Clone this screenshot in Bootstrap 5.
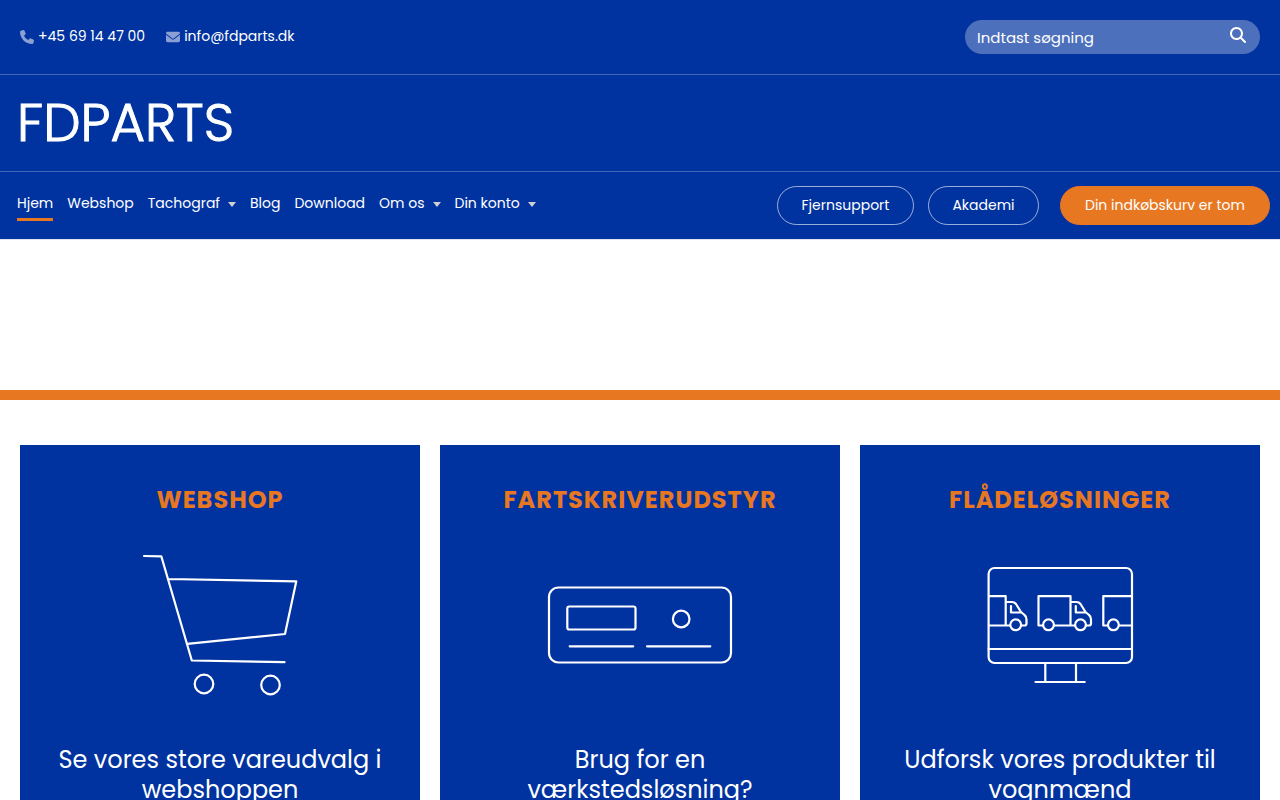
<!DOCTYPE html>
<html lang="da">
<head>
<meta charset="utf-8">
<meta name="viewport" content="width=device-width, initial-scale=1">
<title>FDPARTS</title>
<link href="https://cdn.jsdelivr.net/npm/bootstrap@5.3.0/dist/css/bootstrap.min.css" rel="stylesheet">
<style>
:root { --fd-blue: #0033a0; --fd-orange: #e87722; }
body { font-family: Poppins, Inter, "Noto Sans", sans-serif; font-size: 14px; line-height: 24px; color: #fff; background: #fff; }
header { background: var(--fd-blue); border-bottom: 1px solid #dfe3ea; }
header a { color: #fff; text-decoration: none; white-space: nowrap; }
.rule { border-bottom: 1px solid rgba(255,255,255,.25); }
.topbar { padding: 20px; }
.contact-icon { fill: #8c9fd5; margin-top: 2px; }
.contacts { padding-bottom: 2px; column-gap: 21px; }
.search-box { width: 295px; height: 34px; background: rgba(255,255,255,.3); border-radius: 17px; padding: 0 12px; }
.search-box input { font-size: 15px; color: #fff; background: none; border: 0; outline: 0; padding: 2px 0 0; min-width: 0; }
.search-box input::placeholder { color: #fff; opacity: 1; }
.search-box button { background: none; border: 0; padding: 0 2px 4px; color: #fff; line-height: 0; }
.brand-row { padding: 18px 17px; }
.brand-row a { font-weight: 300; font-size: 53px; line-height: 60px; -webkit-text-stroke: 1px #fff; }
.menu-row { min-height: 67px; padding: 14px 10px 13px 17px; }
.main-menu { column-gap: 14px; }
.main-menu a { display: flex; align-items: center; gap: 8px; padding: 3px 0 1px; border-bottom: 3px solid transparent; line-height: 28px; }
.main-menu a.active { border-color: var(--fd-orange); }
.main-menu .caret::after { content: ""; margin-top: 2px; border: 4px solid transparent; border-top: 5px solid #d0d0d0; border-bottom: 0; }
.pill { font-size: 14px; line-height: 21px; padding: 8px 12px; color: #fff; background: none; border: 1px solid rgba(255,255,255,.6); border-radius: 20px; }
.pill-support { min-width: 137px; }
.pill-academy { min-width: 111px; margin: 0 21px 0 14px; }
.pill-cart { min-width: 210px; background: var(--fd-orange); border-color: var(--fd-orange); }
.hero { height: 160px; border-bottom: 10px solid var(--fd-orange); }
.tiles { padding: 45px 10px; }
.tile-col { padding: 0 10px; }
.tile { background: var(--fd-blue); height: 100%; padding: 40px 32px 60px; color: #fff; }
.tile h2 { font-size: 24px; line-height: 30px; font-weight: 700; letter-spacing: 1px; color: var(--fd-orange); margin: 0 0 15px; text-transform: uppercase; }
.tile p { font-size: 24px; line-height: 30px; margin: 35px 0 0; }
.tile svg { display: block; margin: 0 auto; width: 200px; height: 180px; max-width: 100%; fill: none; stroke: #fff; stroke-width: 2.2; stroke-linecap: round; stroke-linejoin: round; }
</style>
</head>
<body>
<header>
  <div class="topbar rule d-flex flex-wrap justify-content-between align-items-center gap-3">
    <div class="contacts d-flex flex-wrap">
      <a href="tel:+4569144700" class="d-flex align-items-center gap-1"><svg class="contact-icon" width="14" height="14" viewBox="0 0 512 512" aria-hidden="true"><path d="M164.900 24.600c-7.700-18.600-28-28.500-47.400-23.200l-88 24C12.100 30.200 0 46 0 64c0 247.400 200.600 448 448 448 18 0 33.800-12.100 38.600-29.500l24-88c5.300-19.400-4.600-39.700-23.200-47.400l-96-40c-16.300-6.800-35.200-2.100-46.300 11.600L304.700 368C234.300 334.700 177.300 277.700 144 207.300L193.300 167c13.700-11.200 18.400-30 11.600-46.300z"/></svg><span>+45 69 14 47 00</span></a>
      <a href="mailto:info@fdparts.dk" class="d-flex align-items-center gap-1"><svg class="contact-icon" width="14" height="14" viewBox="0 0 512 512" aria-hidden="true"><path d="M48 64C21.500 64 0 85.500 0 112c0 15.100 7.100 29.300 19.200 38.400l217.600 163.200c11.400 8.500 27 8.500 38.400 0l217.600-163.200c12.100-9.100 19.200-23.300 19.200-38.400 0-26.500-21.500-48-48-48zM0 176v208c0 35.300 28.700 64 64 64h384c35.300 0 64-28.700 64-64V176L294.400 339.200c-22.800 17.100-54 17.100-76.800 0z"/></svg><span>info@fdparts.dk</span></a>
    </div>
    <form class="search-box d-flex align-items-center" role="search">
      <input class="flex-grow-1" type="search" placeholder="Indtast søgning" aria-label="Indtast søgning">
      <button type="submit" aria-label="Søg"><svg width="16" height="16" viewBox="0 0 512 512" fill="currentColor" aria-hidden="true"><path d="M416 208c0 45.900-14.900 88.300-40 122.700l126.600 126.700c12.500 12.500 12.500 32.800 0 45.300s-32.800 12.500-45.300 0L330.700 376c-34.400 25.200-76.800 40-122.700 40C93.100 416 0 322.900 0 208S93.100 0 208 0s208 93.100 208 208zM208 352a144 144 0 1 0 0-288 144 144 0 1 0 0 288z"/></svg></button>
    </form>
  </div>
  <div class="brand-row rule d-flex align-items-center"><a href="#">FDPARTS</a></div>
  <div class="menu-row d-flex flex-wrap justify-content-between align-items-start">
    <nav class="main-menu d-flex flex-wrap">
      <a href="#" class="active" aria-current="page">Hjem</a>
      <a href="#">Webshop</a>
      <a href="#" class="caret">Tachograf</a>
      <a href="#">Blog</a>
      <a href="#">Download</a>
      <a href="#" class="caret">Om os</a>
      <a href="#" class="caret">Din konto</a>
    </nav>
    <div class="d-flex flex-wrap">
      <button type="button" class="pill pill-support">Fjernsupport</button>
      <button type="button" class="pill pill-academy">Akademi</button>
      <button type="button" class="pill pill-cart">Din indkøbskurv er tom</button>
    </div>
  </div>
</header>
<main>
  <div class="hero"></div>
  <div class="tiles container-fluid">
    <div class="row g-0 text-center">
      <div class="col-12 col-md-4 tile-col">
        <section class="tile">
          <h2>Webshop</h2>
          <svg viewBox="120 530 200 180" aria-hidden="true">
            <path d="M144 556l17.300.300L191.800 660.500l92.700 1.700M168.300 579l128 2.300L285 634l-97.700 9.800"/>
            <circle cx="204" cy="684" r="9.300"/><circle cx="270.500" cy="685" r="9.300"/>
          </svg>
          <p>Se vores store vareudvalg i webshoppen</p>
        </section>
      </div>
      <div class="col-12 col-md-4 tile-col">
        <section class="tile">
          <h2>Fartskriverudstyr</h2>
          <svg viewBox="540 530 200 180" aria-hidden="true">
            <rect x="549" y="587.500" width="182" height="75" rx="9.500"/>
            <rect x="567.300" y="606.500" width="68.200" height="23" rx="2"/>
            <circle cx="681.200" cy="619" r="8.300"/>
            <path d="M569.700 646.300h63.500M647 646.300h63.300"/>
          </svg>
          <p>Brug for en værkstedsløsning?</p>
        </section>
      </div>
      <div class="col-12 col-md-4 tile-col">
        <section class="tile">
          <h2>Flådeløsninger</h2>
          <svg viewBox="960 530 200 180" aria-hidden="true">
            <rect x="988.600" y="568" width="143.400" height="95" rx="6"/>
            <path d="M988.600 649H1132M1045.300 663v19M1076 663v19M1035.500 682h49.200"/>
            <path d="M989 596.200h16.700v29.300M989 625.500h21M1021.500 625.500h3q2 0 2-2v-4q0-3-2-4.500l-3.500-3-5-8q-1.500-2-4-2h-6M1011 606v6.500h10"/>
            <path d="M1043 625.500h-4.500v-29.300h32v29.300M1054 625.500h20.800M1086 625.500h3q2 0 2-2v-4q0-3-2-4.500l-3.500-3-5-8q-1.500-2-4-2h-6M1075.800 606v6.500h10"/>
            <path d="M1132 596.200h-28.700v29.300h4.500M1119 625.500h13"/>
            <circle cx="1015.700" cy="624.800" r="5.400"/><circle cx="1048.500" cy="624.800" r="5.400"/><circle cx="1080.500" cy="624.800" r="5.400"/><circle cx="1113.400" cy="624.800" r="5.400"/>
          </svg>
          <p>Udforsk vores produkter til vognmænd</p>
        </section>
      </div>
    </div>
  </div>
</main>
<script src="https://cdn.jsdelivr.net/npm/bootstrap@5.3.0/dist/js/bootstrap.bundle.min.js"></script>
</body>
</html>
